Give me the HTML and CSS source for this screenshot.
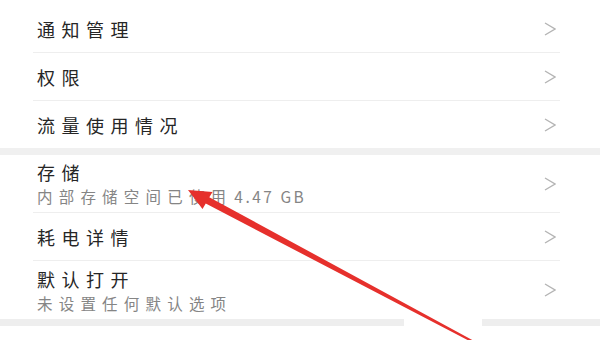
FILE: index.html
```html
<!DOCTYPE html>
<html lang="zh-CN">
<head>
<meta charset="utf-8">
<title>应用信息</title>
<link rel="stylesheet" href="styles.css">
</head>
<body>
<div class="page">
  <div class="group">
    <div class="row">
      <span class="title">通知管理</span>
      <svg class="chev" viewBox="0 0 12 14"><polyline points="1,1 11,7 1,13"/></svg>
    </div>
    <div class="row">
      <span class="title">权限</span>
      <svg class="chev" viewBox="0 0 12 14"><polyline points="1,1 11,7 1,13"/></svg>
    </div>
    <div class="row last">
      <span class="title">流量使用情况</span>
      <svg class="chev" viewBox="0 0 12 14"><polyline points="1,1 11,7 1,13"/></svg>
    </div>
  </div>
  <div class="band"></div>
  <div class="group">
    <div class="row tall">
      <div class="text">
        <div class="title">存储</div>
        <div class="sub">内部存储空间已使用<span class="num">4.47 GB</span></div>
      </div>
      <svg class="chev" viewBox="0 0 12 14"><polyline points="1,1 11,7 1,13"/></svg>
    </div>
    <div class="row">
      <span class="title">耗电详情</span>
      <svg class="chev" viewBox="0 0 12 14"><polyline points="1,1 11,7 1,13"/></svg>
    </div>
    <div class="row tall last">
      <div class="text">
        <div class="title">默认打开</div>
        <div class="sub">未设置任何默认选项</div>
      </div>
      <svg class="chev" viewBox="0 0 12 14"><polyline points="1,1 11,7 1,13"/></svg>
    </div>
  </div>
  <div class="band band-gap"></div>

  <svg class="arrow" viewBox="0 0 600 340">
    <polygon points="188,190 212.5,192 209.3,197.2 478.5,343.4 477.5,345.2 205.75,203.6 202.5,209"/>
  </svg>
</div>
</body>
</html>
```

FILE: styles.css
```css
body {
  margin: 0;
  background: #ffffff;
  font-family: "Noto Sans CJK SC", "Noto Sans", sans-serif;
}

.page {
  position: relative;
  width: 600px;
  height: 340px;
  overflow: hidden;
  padding-top: 5px;
  box-sizing: border-box;
  background: #ffffff;
}

.group {
  display: flex;
  flex-direction: column;
}

.row {
  box-sizing: border-box;
  display: flex;
  align-items: center;
  justify-content: space-between;
  height: 48px;
  margin: 0 40px 0 33px;
  padding: 0 4px;
  border-bottom: 1px solid #eeeeee;
}

.row.tall {
  height: 58px;
}

.row.last {
  border-bottom: none;
  height: 47px;
}

.row.tall.last {
  height: 58px;
}

.title {
  font-size: 18px;
  letter-spacing: 6.5px;
  color: #262626;
  line-height: 26px;
}

.text {
  display: flex;
  flex-direction: column;
}

.sub {
  font-size: 15.5px;
  letter-spacing: 6.2px;
  color: #858585;
  line-height: 23px;
}

.num {
  letter-spacing: 2.5px;
  margin-left: 2px;
}

.chev {
  width: 12px;
  height: 14px;
  flex: none;
}

.chev polyline {
  fill: none;
  stroke: #b4b4b4;
  stroke-width: 1.4;
}

.band {
  height: 7px;
  background: #f0f0f0;
}

.band-gap {
  background: linear-gradient(to right, #eeeeee 0, #eeeeee 404px, #ffffff 404px, #ffffff 482px, #eeeeee 482px);
}

.arrow {
  position: absolute;
  left: 0;
  top: 0;
  width: 600px;
  height: 340px;
  pointer-events: none;
}

.arrow polygon {
  fill: #e6302c;
}
```
